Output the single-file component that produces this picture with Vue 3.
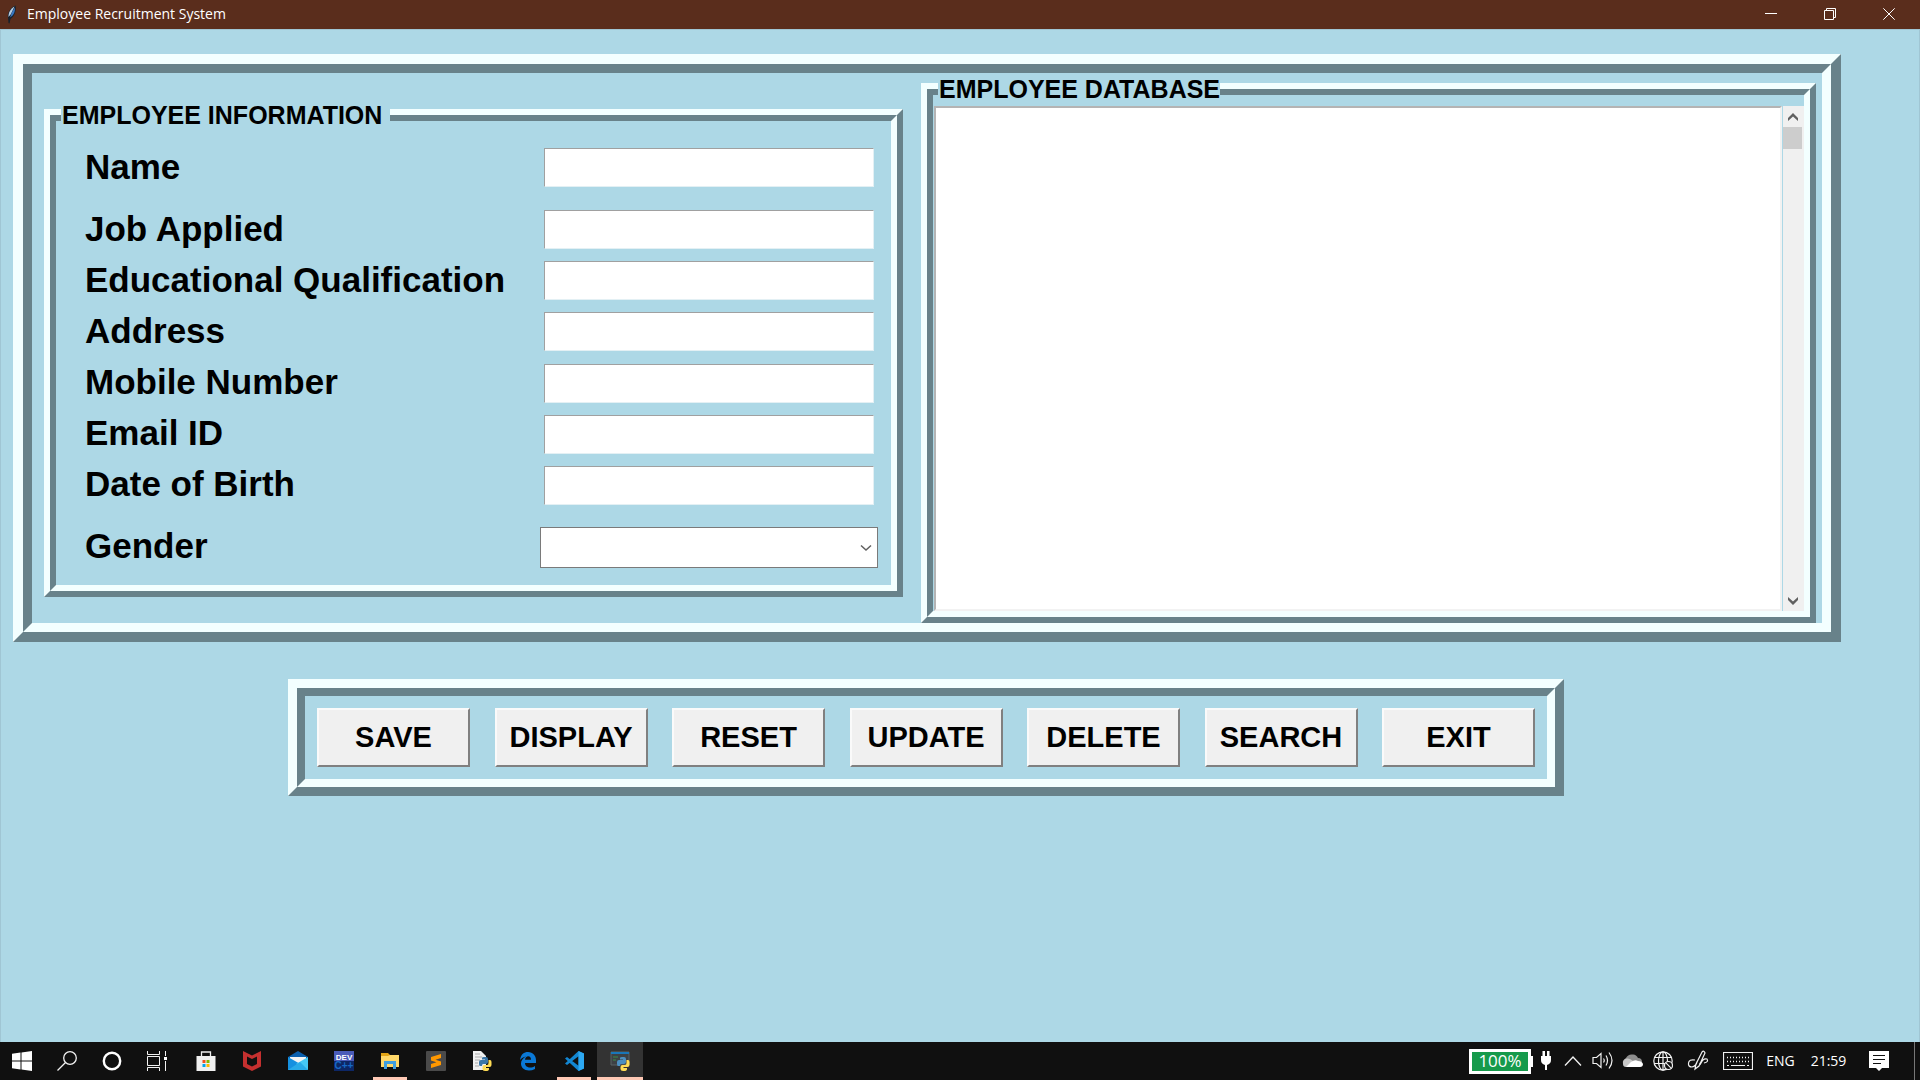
<script setup>
import { reactive, ref } from 'vue'

const fields = [
  { id: 'name', label: 'Name' },
  { id: 'job', label: 'Job Applied' },
  { id: 'education', label: 'Educational Qualification' },
  { id: 'address', label: 'Address' },
  { id: 'mobile', label: 'Mobile Number' },
  { id: 'email', label: 'Email ID' },
  { id: 'dob', label: 'Date of Birth' },
]
const form = reactive({ name: '', job: '', education: '', address: '', mobile: '', email: '', dob: '', gender: '' })
const records = ref('')
const actions = ['SAVE', 'DISPLAY', 'RESET', 'UPDATE', 'DELETE', 'SEARCH', 'EXIT']
</script>

<template>
  <div class="screen">
    <header class="titlebar">
      <svg class="feather" width="12" height="20" viewBox="0 0 12 20" aria-hidden="true">
        <path d="M2.500 18 L2 12 C1 8 5 2 9.500 .5 C10.500 5 9 11 4.500 14 L3.500 18.500Z" fill="#16202c" />
        <path d="M2.500 12 C2 8 5 3 8.500 1.500 L5 9Z" fill="#b5cbe0" />
        <path d="M8.700 2.500 C9.500 6 8 10 4 12.500 L6 7Z" fill="#3a78c2" />
      </svg>
      <h1>Employee Recruitment System</h1>
      <div class="window-controls">
        <button type="button" aria-label="Minimize">
          <svg width="12" height="12" viewBox="0 0 12 12"><path d="M0 5.500H12" /></svg>
        </button>
        <button type="button" aria-label="Restore">
          <svg width="12" height="12" viewBox="0 0 12 12"><path d="M.5 2.500H9.500V11.500H.5ZM2.500 2.500V.5H11.500V9.500H9.500" /></svg>
        </button>
        <button type="button" aria-label="Close">
          <svg width="12" height="12" viewBox="0 0 12 12"><path d="M.3.3L11.700 11.700M11.700.3L.3 11.700" /></svg>
        </button>
      </div>
    </header>

    <main class="client">
      <div class="ridge main-frame">
        <div class="ridge-inner panels">
          <fieldset class="ridge small info">
            <legend class="caption wide">EMPLOYEE INFORMATION</legend>
            <div class="ridge-inner">
              <div class="form">
                <template v-for="f in fields" :key="f.id">
                  <label :for="f.id">{{ f.label }}</label>
                  <input :id="f.id" v-model="form[f.id]" type="text" />
                </template>
                <label for="gender">Gender</label>
                <div class="combo">
                  <select id="gender" v-model="form.gender">
                    <option value=""></option>
                    <option>Male</option>
                    <option>Female</option>
                  </select>
                  <svg class="combo-arrow" width="12" height="8" viewBox="0 0 12 8" aria-hidden="true"><path d="M1 1.500L6 6L11 1.500" fill="none" stroke="#606060" stroke-width="1.500" /></svg>
                </div>
              </div>
            </div>
          </fieldset>

          <section class="ridge small database">
            <h2 class="caption">EMPLOYEE DATABASE</h2>
            <div class="ridge-inner list">
              <textarea v-model="records" aria-label="Employee database"></textarea>
              <div class="scrollbar">
                <button type="button" aria-label="Scroll up">
                  <svg width="10" height="8" viewBox="0 0 10 8"><path d="M0 5L5 0L10 5V8L5 3.500L0 8Z" fill="#606060" /></svg>
                </button>
                <div class="thumb"></div>
                <button type="button" class="down" aria-label="Scroll down">
                  <svg width="10" height="8" viewBox="0 0 10 8"><path d="M0 3L5 8L10 3V0L5 4.500L0 0Z" fill="#606060" /></svg>
                </button>
              </div>
            </div>
          </section>
        </div>
      </div>

      <div class="ridge medium action-frame">
        <div class="ridge-inner actions">
          <button v-for="a in actions" :key="a" type="button">{{ a }}</button>
        </div>
      </div>
    </main>

    <footer class="taskbar">
      <div class="system">
        <button type="button" aria-label="Start">
          <svg width="20" height="20" viewBox="0 0 20 20" fill="#fff"><path d="M0 2.800L8.500 1.600V9.500H0ZM9.500 1.400L20 0V9.500H9.500ZM0 10.500H8.500V18.400L0 17.200ZM9.500 10.500H20V20L9.500 18.600Z" /></svg>
        </button>
        <button type="button" aria-label="Search">
          <svg width="20" height="20" viewBox="0 0 20 20" fill="none" stroke="#f2f2f2" stroke-width="1.300"><circle cx="13" cy="7" r="6.300" /><path d="M8.500 11.500L.5 19.500" /></svg>
        </button>
        <button type="button" aria-label="Cortana">
          <svg width="20" height="20" viewBox="0 0 20 20" fill="none" stroke="#fff" stroke-width="2.400"><circle cx="10" cy="10" r="8.200" /></svg>
        </button>
        <button type="button" aria-label="Task view">
          <svg width="20" height="20" viewBox="0 0 20 20" fill="none" stroke="#f2f2f2"><path d="M.5 0V3.500H12.500V0M.5 5.500H12.500V14.500H.5ZM.5 20V16.500H12.500V20M18.500 0V5M18.500 10V20" /><path d="M17 6H20V9H17Z" fill="#fff" stroke="none" /></svg>
        </button>
      </div>
      <div class="apps">
        <button type="button" aria-label="Store">
          <svg width="20" height="20" viewBox="0 0 20 20"><path d="M5.500 5V1H14.500V5" fill="none" stroke="#eee" stroke-width="1.300" /><path d="M.5 5H19.500V20H.5Z" fill="#f0f0f0" /><path d="M6.500 9H9.500V12H6.500Z" fill="#f25022" /><path d="M10.500 9H13.500V12H10.500Z" fill="#7fba00" /><path d="M6.500 13H9.500V16H6.500Z" fill="#00a4ef" /><path d="M10.500 13H13.500V16H10.500Z" fill="#ffb900" /></svg>
        </button>
        <button type="button" aria-label="McAfee">
          <svg width="20" height="20" viewBox="0 0 20 20"><path d="M1 0L10 4.500L19 0V15.500L10 20L1 15.500Z" fill="#c5302f" /><path d="M5 5.500L10 8L15 5.500V13L10 15.500L5 13Z" fill="#101010" /></svg>
        </button>
        <button type="button" aria-label="Mail">
          <svg width="20" height="20" viewBox="0 0 20 20"><path d="M0 6L10 0L20 6V10H0Z" fill="#0a5fae" /><path d="M2 6H18V13H2Z" fill="#f4f4f4" /><path d="M0 6L14 14L20 19H0Z" fill="#1590e0" /><path d="M20 6L8 13L20 19Z" fill="#45c8f5" /><path d="M0 19L12 11L20 19Z" fill="#28aae8" /></svg>
        </button>
        <button type="button" aria-label="Dev-C++">
          <svg width="20" height="20" viewBox="0 0 20 20"><path d="M0 0H20V20H0Z" fill="#4a5bb8" /><path d="M0 10H20V20H0Z" fill="#0d2766" /><text x="10" y="9" text-anchor="middle" font-family="Liberation Sans, sans-serif" font-size="8" font-weight="700" fill="#fff">DEV</text><text x="10" y="18" text-anchor="middle" font-family="Liberation Sans, sans-serif" font-size="10" font-weight="700" fill="#1769c5">C++</text></svg>
        </button>
        <button type="button" class="running" aria-label="File Explorer">
          <svg width="20" height="20" viewBox="0 0 20 20"><path d="M1 2H8L10 4H19V8H1Z" fill="#e2a416" /><path d="M1 5H8L10 4H19V16H1Z" fill="#ffd869" /><path d="M4 18V10H16V18H13V13H7V18Z" fill="#3f9fe0" /></svg>
        </button>
        <button type="button" aria-label="Sublime Text">
          <svg width="20" height="20" viewBox="0 0 20 20"><rect width="20" height="20" rx="1" fill="#4a4a4a" /><path d="M15 3V7L9.500 8.800L15 10.500V14L5 17V13L10.500 11.300L5 9.600V6Z" fill="#ff9800" /></svg>
        </button>
        <button type="button" aria-label="Python file">
          <svg width="20" height="20" viewBox="0 0 20 20"><path d="M1 0H9L14 5V19H1Z" fill="#f0f0f0" /><path d="M3 3H8M3 6H10M3 9H8M3 12H6M3 15H7" stroke="#aaa" /><path d="M10 7Q10 6 12 6H14Q16 6 16 8V11Q16 13 14 13H11Q10 13 10 15H8Q7 15 7 13V11Q7 9 9 9H13V8.500H10Z" fill="#3b77a8" /><path d="M16.500 9H18Q19.500 9 19.500 11V14Q19.500 16 17.500 16H13.500V17H17V18Q17 20 14 20H13Q10.500 20 10.500 18V16Q10.500 14 12.500 14H15Q16.500 14 16.500 12Z" fill="#ffdc55" /></svg>
        </button>
        <button type="button" aria-label="Edge">
          <svg width="20" height="20" viewBox="0 0 20 20"><path d="M2 9C3 3 6 1 10 1C15 1 18 5 18 9V12H7C7 15 9.500 16.500 12 16.500C14 16.500 15.500 16 17 15V18C15 19 13 19.500 11 19.500C6 19.500 3 16.500 3 12.500C3 9.500 5 7 8 5.500C5.500 6 3.500 7 2 9ZM7 8.800H13C13 6.500 12 5.300 10.300 5.300C8.500 5.300 7.300 6.500 7 8.800Z" fill="#0a78d6" fill-rule="evenodd" /></svg>
        </button>
        <button type="button" class="running" aria-label="Visual Studio Code">
          <svg width="20" height="20" viewBox="0 0 20 20"><path d="M14.500 0L20 2.500V17.500L14.500 20L1 7.500L3 6L14.500 14.800V5.200L3 14L1 12.500Z" fill="#1286d2" /><path d="M14.500 0L20 2.500V17.500L14.500 20Z" fill="#2da8f2" /></svg>
        </button>
        <button type="button" class="running active" aria-label="Python">
          <svg width="20" height="20" viewBox="0 0 20 20"><path d="M1 1H19V14H1Z" fill="#3d4144" stroke="#5b6265" /><path d="M1 1H19V3H1Z" fill="#1976b8" /><path d="M3 6H8M3 9H6" stroke="#3d8d46" /><path d="M10 7Q10 6 12 6H14Q16 6 16 8V11Q16 13 14 13H11Q10 13 10 15H8Q7 15 7 13V11Q7 9 9 9H13V8.500H10Z" fill="#4c8fc0" /><path d="M16.500 9H18Q19.500 9 19.500 11V14Q19.500 16 17.500 16H13.500V17H17V18Q17 20 14 20H13Q10.500 20 10.500 18V16Q10.500 14 12.500 14H15Q16.500 14 16.500 12Z" fill="#ffdc55" /></svg>
        </button>
      </div>

      <div class="tray">
        <div class="battery-cell"><span class="battery">100%</span></div>
        <div class="plug">
          <svg width="12" height="20" viewBox="0 0 12 20" fill="#fff"><path d="M2.500 0H5V5H7V0H9.500V5H11V9C11 12 9.500 13 7 14V19H5V14C2.500 13 1 12 1 9V5H2.500Z" /></svg>
        </div>
        <button type="button" class="cell" aria-label="Hidden icons">
          <svg width="18" height="10" viewBox="0 0 18 10" fill="none" stroke="#f2f2f2" stroke-width="1.300"><path d="M1 9.500L9 1L17 9.500" /></svg>
        </button>
        <button type="button" class="cell" aria-label="Volume">
          <svg width="22" height="20" viewBox="0 0 22 20" fill="none" stroke="#f2f2f2" stroke-width="1.200"><path d="M1 6.500H4.500L9 2.500V16.500L4.500 12.500H1Z" /><path d="M11.500 7.500Q13 9.500 11.500 11.500M14 4.500Q17 9.500 14 14.500M17 1.500Q23 9.500 17 17.500" /></svg>
        </button>
        <button type="button" class="cell" aria-label="OneDrive">
          <svg width="22" height="14" viewBox="0 0 22 14"><path d="M4 9Q1 6 4 4Q6 0 10.500 .5Q14 0 16 4Q20 4 20 8L14 11Z" fill="#8d8d8d" /><path d="M1 10Q0 5 5 4.500Q8 4 11 7L7 13H4Q1 13 1 10Z" fill="#c8c8c8" /><path d="M4 13L9 8Q13 5 16 7Q20 7 21 10Q21 13 18 13Z" fill="#fff" /></svg>
        </button>
        <button type="button" class="cell" aria-label="Network">
          <svg width="20" height="20" viewBox="0 0 20 20" fill="none" stroke="#f2f2f2" stroke-width="1.200"><circle cx="10" cy="10" r="9.200" /><ellipse cx="10" cy="10" rx="4.500" ry="9.200" /><path d="M1.500 6.500H18.500M1 12.500H18.500M10 1V19" /><circle cx="15.500" cy="14.500" r="4" fill="#101010" /><path d="M12.700 11.700L18.300 17.300" /></svg>
        </button>
        <button type="button" class="cell pen" aria-label="Ink Workspace">
          <svg width="22" height="22" viewBox="0 0 22 22" fill="none" stroke="#f2f2f2" stroke-width="1.200"><path d="M8 19L9 14L15 2Q17 0 18 3L12 16ZM8 10Q2 9 1.500 13Q1 17 5 17Q9 16 10 12M13 13Q12 17 14 13Q16 8 20 9Q22 12 17 13" /></svg>
        </button>
        <button type="button" class="cell keyboard" aria-label="Touch keyboard">
          <svg width="30" height="18" viewBox="0 0 30 18" fill="none" stroke="#f2f2f2"><path d="M.5.5H29.500V17.500H.5Z" stroke-width="1.200" /><path d="M4 5.500H26M4 9.500H26" stroke-dasharray="1 2" stroke-width="1.500" /><path d="M4 13.500H6M8 13.500H22M24 13.500H26" /></svg>
        </button>
        <span class="lang">ENG</span>
        <time class="clock">21:59</time>
        <button type="button" class="cell notifications" aria-label="Notifications">
          <svg width="20" height="20" viewBox="0 0 20 20"><path d="M0 0H20V17H13L10 20L7 17H0Z" fill="#fff" /><path d="M4 4.500H16M4 8.500H16M4 12.500H12" stroke="#101010" /></svg>
        </button>
        <button type="button" class="show-desktop" aria-label="Show desktop"></button>
      </div>
    </footer>
  </div>
</template>

<style>
body {
  margin: 0;
  background: #add8e6;
}
</style>

<style scoped>
.screen {
  --light: #f3ffff;
  --dark: #68828a;
  --sky: #add8e6;
  display: flex;
  flex-direction: column;
  min-height: 100vh;
  color: #000;
  font-family: "Liberation Sans", Arial, sans-serif;
}
.screen *,
.screen {
  box-sizing: border-box;
}
button {
  margin: 0;
  padding: 0;
  border: 0;
  background: none;
  font-family: inherit;
}

/* Title bar */
.titlebar {
  display: flex;
  align-items: center;
  height: 29px;
  padding-left: 6px;
  background: #5a2d1c;
  color: #fff;
}
.titlebar h1 {
  flex: 1;
  margin: 0 0 0 9px;
  padding-bottom: 2px;
  font: 400 14px/20px "Open Sans", "Noto Sans", sans-serif;
}
.window-controls {
  display: flex;
}
.window-controls button {
  display: grid;
  place-items: center;
  width: 59px;
  height: 29px;
  padding-bottom: 1px;
}
.window-controls button:last-child {
  width: 61px;
  padding-right: 2px;
}
.window-controls path {
  fill: none;
  stroke: #fff;
}

/* Client area */
.client {
  flex: 1;
  padding-top: 24px;
  border: 1px solid #a0c6d4;
  border-bottom: 0;
  background: var(--sky);
}

/* Two-tone raised frames */
.ridge {
  --outer: 10px;
  --inner: 9px;
  position: relative;
  display: flex;
  min-width: 0;
  margin: 0;
  padding: 0;
  border: var(--outer) solid;
  border-color: var(--light) var(--dark) var(--dark) var(--light);
}
.ridge-inner {
  flex: 1;
  min-width: 0;
  border: var(--inner) solid;
  border-color: var(--dark) var(--light) var(--light) var(--dark);
}
.ridge.medium {
  --outer: 9px;
  --inner: 8px;
}
.ridge.small {
  --outer: 6px;
  --inner: 6px;
}
.main-frame {
  margin: 0 78px 0 12px;
}
.panels {
  display: grid;
  grid-template-columns: 859fr 895fr;
  gap: 18px;
  padding: 10px 6px 0 12px;
}
.info {
  margin: 26px 0;
}
.caption {
  position: absolute;
  top: -14px;
  left: 11px;
  margin: 0;
  padding: 0 0 0 1px;
  background: var(--sky);
  font-size: 25px;
  font-weight: 700;
  line-height: 28px;
  white-space: nowrap;
}
.caption.wide {
  padding-right: 8px;
}

/* Form */
.form {
  display: grid;
  grid-template-columns: 1fr 338px;
  grid-template-rows: 73px repeat(6, 1fr) 72px;
  align-items: center;
  height: 464px;
  padding: 10px 13px 2px 29px;
}
.form label {
  padding-bottom: 2px;
  font-size: 35px;
  font-weight: 700;
  line-height: 40px;
  white-space: nowrap;
}
.form input {
  height: 39px;
  margin: 0 4px;
  padding: 0 6px;
  border: 1px solid;
  border-color: #a0a0a0 #e3f0f4 #e3f0f4 #a0a0a0;
  background: #fff;
  font: 700 26px "Liberation Sans", Arial, sans-serif;
}
.combo {
  position: relative;
  display: flex;
}
.combo select {
  width: 100%;
  height: 41px;
  padding: 0 24px 0 6px;
  appearance: none;
  border: 1px solid #7a7a7a;
  border-radius: 0;
  background: #fff;
  font: 700 26px "Liberation Sans", Arial, sans-serif;
}
.combo-arrow {
  position: absolute;
  top: 17px;
  right: 6px;
  pointer-events: none;
}

/* Database list */
.list {
  display: flex;
  padding: 11px 0 0 1px;
}
.list textarea {
  flex: 1;
  min-width: 0;
  margin: 0 1px 0 0;
  padding: 4px;
  border: 2px solid;
  border-color: #b4b4b4 #f2f2f2 #f2f2f2 #b4b4b4;
  outline: 0;
  resize: none;
  background: #fff;
  font: 700 20px "Liberation Sans", Arial, sans-serif;
}
.scrollbar {
  display: flex;
  flex-direction: column;
  width: 21px;
  padding-right: 1px;
  background: #f0f0f0;
}
.scrollbar button {
  display: grid;
  place-items: center;
  height: 21px;
}
.scrollbar .down {
  margin-top: auto;
}
.thumb {
  height: 22px;
  margin: 0 1px 0 0;
  background: #cdcdcd;
}

/* Action buttons */
.action-frame {
  margin: 37px 355px 0 287px;
}
.actions {
  display: flex;
  justify-content: space-between;
  padding: 12px;
}
.actions button {
  width: 153px;
  height: 59px;
  border: 2px solid;
  border-color: #fafafa #808080 #808080 #fafafa;
  background: #f0f0f0;
  color: #000;
  font-size: 29px;
  font-weight: 700;
}

/* Taskbar */
.taskbar {
  display: flex;
  justify-content: space-between;
  height: 38px;
  background: #101010;
  color: #fff;
}
.system,
.apps,
.tray {
  display: flex;
}
.system button,
.apps button {
  display: grid;
  place-items: center;
  width: 45px;
  height: 38px;
}
.system button {
  padding-right: 2px;
}
.apps {
  margin: 0 auto 0 3px;
}
.apps button {
  position: relative;
  width: 46px;
}
.apps .running::after {
  content: "";
  position: absolute;
  right: 6px;
  bottom: 0;
  left: 6px;
  height: 3px;
  background: #ffc9b5;
}
.apps .active {
  background: #333;
}
.apps .active::after {
  right: 0;
  left: 0;
}
.tray {
  align-items: center;
  font-family: "Open Sans", "Noto Sans", sans-serif;
  font-size: 14px;
  line-height: 20px;
}
.battery-cell {
  width: 65px;
}
.battery {
  position: relative;
  display: block;
  width: 62px;
  height: 25px;
  border: 3px solid #fff;
  background: #169a4b;
  font-size: 17px;
  line-height: 18px;
  text-align: center;
}
.battery::after {
  content: "";
  position: absolute;
  top: 4px;
  right: -5px;
  width: 2px;
  height: 11px;
  background: #fff;
}
.plug {
  display: grid;
  place-items: center;
  width: 24px;
}
.cell {
  display: grid;
  place-items: center;
  width: 30px;
  height: 38px;
}
.pen,
.keyboard {
  width: 40px;
}
.lang {
  width: 45px;
  text-align: center;
}
.clock {
  width: 51px;
  text-align: center;
}
.notifications {
  width: 50px;
}
.show-desktop {
  width: 6px;
  height: 38px;
  margin-left: 10px;
  border-left: 1px solid #777;
}
</style>
